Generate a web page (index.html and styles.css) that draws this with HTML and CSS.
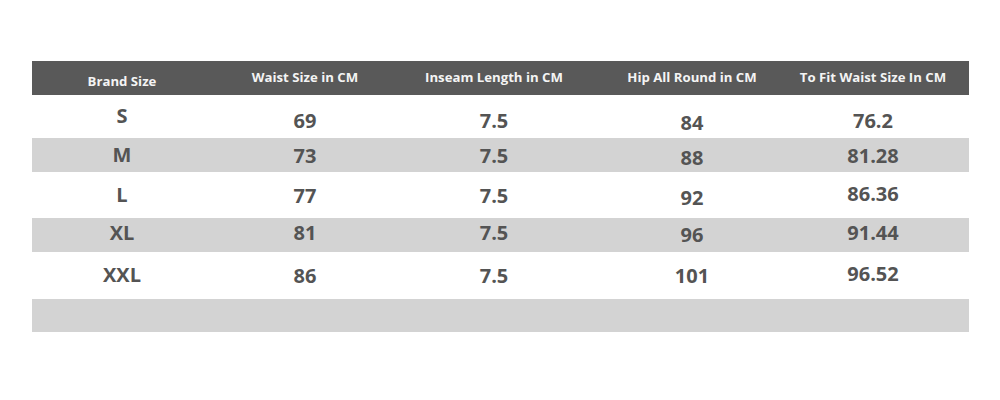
FILE: index.html
```html
<!DOCTYPE html>
<html>
<head>
<meta charset="utf-8">
<link rel="stylesheet" href="styles.css">
</head>
<body>
<div class="page">
  <div class="table">
    <div class="row head">
      <div class="cell c1 low">Brand Size</div>
      <div class="cell">Waist Size in CM</div>
      <div class="cell">Inseam Length in CM</div>
      <div class="cell">Hip All Round in CM</div>
      <div class="cell">To Fit Waist Size In CM</div>
    </div>
    <div class="row tall first">
      <div class="cell c1">S</div>
      <div class="cell">69</div>
      <div class="cell">7.5</div>
      <div class="cell hip">84</div>
      <div class="cell">76.2</div>
    </div>
    <div class="row short gray">
      <div class="cell c1">M</div>
      <div class="cell">73</div>
      <div class="cell">7.5</div>
      <div class="cell hip">88</div>
      <div class="cell">81.28</div>
    </div>
    <div class="row tall">
      <div class="cell c1">L</div>
      <div class="cell">77</div>
      <div class="cell">7.5</div>
      <div class="cell hip">92</div>
      <div class="cell up">86.36</div>
    </div>
    <div class="row short gray raise">
      <div class="cell c1">XL</div>
      <div class="cell">81</div>
      <div class="cell">7.5</div>
      <div class="cell hip">96</div>
      <div class="cell">91.44</div>
    </div>
    <div class="row tall last">
      <div class="cell c1">XXL</div>
      <div class="cell">86</div>
      <div class="cell">7.5</div>
      <div class="cell">101</div>
      <div class="cell up">96.52</div>
    </div>
    <div class="row short gray empty"></div>
  </div>
</div>
</body>
</html>
```
FILE: styles.css
```css
html, body {
  margin: 0;
  padding: 0;
  background: #ffffff;
}
.page {
  width: 1000px;
  height: 400px;
  padding-top: 61px;
  box-sizing: border-box;
}
.table {
  margin-left: 32px;
  width: 937px;
  font-family: "Open Sans", "Liberation Sans", sans-serif;
  font-weight: 700;
  color: #545454;
}
.row {
  display: grid;
  grid-template-columns: 180px 186px 192px 204px 158px;
  align-items: center;
}
.cell {
  text-align: center;
  white-space: nowrap;
}
.head {
  background: #595959;
  height: 34px;
  color: #f4f4f4;
  font-size: 13.2px;
}
.head .cell {
  padding-bottom: 2px;
}
.head .low {
  padding-top: 5px;
  padding-bottom: 0;
}
.tall {
  height: 46px;
  font-size: 20px;
}
.first {
  height: 43px;
}
.first .cell {
  padding-top: 7px;
}
.first .c1 {
  padding-top: 0;
}
.last {
  height: 47px;
}
.short {
  height: 34px;
  font-size: 20px;
}
.gray {
  background: #d3d3d3;
}
.hip {
  padding-top: 4px;
}
.first .hip {
  padding-top: 11px;
}
.c1 {
  padding-bottom: 2px;
}
.raise .cell {
  padding-bottom: 6px;
}
.raise .hip {
  padding-top: 0;
  padding-bottom: 2px;
}
.up {
  padding-bottom: 4px;
}
.empty {
  height: 33px;
}
```
